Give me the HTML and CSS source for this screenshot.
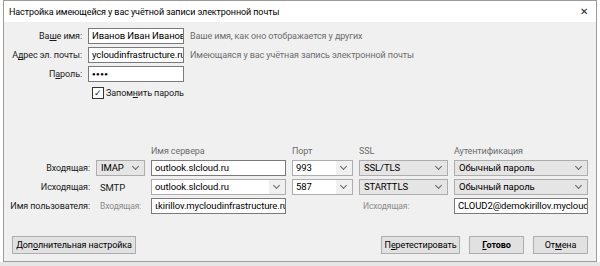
FILE: index.html
```html
<!DOCTYPE html>
<html lang="ru">
<head>
    <meta charset="UTF-8">
    <title>Настройка учётной записи</title>
    <link rel="stylesheet" href="styles.css">
</head>
<body>
    <div class="window">
        <div class="titlebar">
            <span class="title">Настройка имеющейся у вас учётной записи электронной почты</span>
            <span class="close">&#x2715;</span>
        </div>
        <div class="content">
            <div class="account">
                <label class="label">Ва<u>ш</u>е имя:</label>
                <div class="input">Иванов Иван Ивановι</div>
                <span class="hint">Ваше имя, как оно отображается у других</span>

                <label class="label">А<u>д</u>рес эл. почты:</label>
                <div class="input">ycloudinfrastructure.ru</div>
                <span class="hint">Имеющаяся у вас учётная запись электронной почты</span>

                <label class="label">П<u>а</u>роль:</label>
                <div class="input dots">&#x25CF;&#x25CF;&#x25CF;&#x25CF;</div>
                <span></span>

                <span></span>
                <div class="check">
                    <span class="box">&#x2713;</span>
                    <span>Запом<u>н</u>ить пароль</span>
                </div>
            </div>

            <div class="servers">
                <span></span>
                <span></span>
                <span class="head">Имя сервера</span>
                <span class="head">Порт</span>
                <span class="head">SSL</span>
                <span class="head">Аутентификация</span>

                <span class="label">Входящая:</span>
                <div class="select">IMAP<span class="arrow"></span></div>
                <div class="input">outlook.slcloud.ru</div>
                <div class="combo"><span class="value">993</span><span class="arrow"></span></div>
                <div class="select">SSL/TLS<span class="arrow"></span></div>
                <div class="select">Обычный пароль<span class="arrow"></span></div>

                <span class="label">Исходящая:</span>
                <span class="plain">SMTP</span>
                <div class="combo"><span class="value">outlook.slcloud.ru</span><span class="arrow"></span></div>
                <div class="combo"><span class="value">587</span><span class="arrow"></span></div>
                <div class="select">STARTTLS<span class="arrow"></span></div>
                <div class="select">Обычный пароль<span class="arrow"></span></div>

                <span class="label">Имя пользователя:</span>
                <span class="muted">Входящая:</span>
                <div class="input">ιkirillov.mycloudinfrastructure.ru</div>
                <span></span>
                <span class="muted">Исходящая:</span>
                <div class="input">CLOUD2@demokirillov.mycloud</div>
            </div>

            <div class="actions">
                <button class="btn wide">Доп<u>о</u>лнительная настройка</button>
                <div class="right">
                    <button class="btn retest">П<u>е</u>ретестировать</button>
                    <button class="btn default"><u>Г</u>отово</button>
                    <button class="btn">От<u>м</u>ена</button>
                </div>
            </div>
        </div>
    </div>
    <div class="desk"></div>
</body>
</html>
```

FILE: styles.css
```css
body {
    margin: 0;
    width: 600px;
    height: 266px;
    overflow: hidden;
    background: #ffffff;
    font-family: Roboto, 'Liberation Sans', sans-serif;
    font-size: 9px;
    letter-spacing: -0.1px;
    color: #1a1a1a;
}
.window {
    margin-left: 3px;
    width: 592px;
    height: 260px;
    border: 1px solid #9b9b9b;
    display: flex;
    flex-direction: column;
    background: #f0f0f0;
}
.titlebar {
    height: 21px;
    background: #fff;
    display: flex;
    align-items: center;
    justify-content: space-between;
    padding: 0 8px 0 5px;
}
.title {
    color: #000;
}
.close {
    font-size: 10px;
    color: #222;
}
.content {
    flex: 1;
    display: flex;
    flex-direction: column;
}
.account {
    display: grid;
    grid-template-columns: 78px 96px auto;
    column-gap: 6px;
    row-gap: 3px;
    grid-auto-rows: 16px;
    align-items: center;
    margin-top: 6px;
}
.label {
    text-align: right;
    white-space: nowrap;
}
.input {
    height: 14px;
    line-height: 14px;
    background: #fff;
    border: 1px solid #7a7a7a;
    padding: 0 3px;
    white-space: nowrap;
    overflow: hidden;
    font-size: 9.5px;
    color: #000;
}
.dots {
    font-size: 6px;
    letter-spacing: 0.5px;
}
.hint {
    color: #6d6d6d;
    white-space: nowrap;
}
.check {
    display: flex;
    align-items: center;
    gap: 2px;
    margin-left: 4px;
    white-space: nowrap;
}
.box {
    width: 10px;
    height: 10px;
    border: 1px solid #333;
    background: #fff;
    font-size: 9px;
    line-height: 10px;
    text-align: center;
}
.servers {
    display: grid;
    grid-template-columns: 86px 49px 135px 61px 89px 134px;
    column-gap: 6px;
    grid-template-rows: 13px 16px 16px 16px;
    row-gap: 3px;
    align-items: center;
    margin-top: 43px;
}
.head {
    color: #6d6d6d;
}
.plain {
    padding-left: 4px;
    font-size: 9.5px;
}
.muted {
    color: #8c8c8c;
    padding-left: 4px;
    font-size: 8.5px;
}
.select,
.combo {
    height: 14px;
    line-height: 14px;
    border: 1px solid #adadad;
    display: flex;
    justify-content: space-between;
    align-items: center;
    white-space: nowrap;
    font-size: 9.5px;
    color: #000;
}
.select {
    background: #e5e5e5;
    padding-left: 4px;
}
.combo {
    background: #f0f0f0;
}
.combo .value {
    flex: 1;
    background: #fff;
    height: 14px;
    padding-left: 3px;
    overflow: hidden;
}
.arrow {
    width: 16px;
    height: 14px;
    position: relative;
}
.arrow::after {
    content: "";
    position: absolute;
    left: 5px;
    top: 3px;
    width: 4px;
    height: 4px;
    border-right: 1px solid #666;
    border-bottom: 1px solid #666;
    transform: rotate(45deg);
}
.actions {
    display: flex;
    justify-content: space-between;
    padding: 0 8px;
    margin-top: 22px;
}
.right {
    display: flex;
    gap: 9px;
}
.btn {
    height: 18px;
    width: 55px;
    padding: 0;
    background: #e1e1e1;
    border: 1px solid #adadad;
    font-family: inherit;
    font-size: 9px;
    letter-spacing: -0.1px;
    white-space: nowrap;
    color: #000;
}
.btn.wide {
    width: 124px;
}
.btn.retest {
    width: 79px;
}
.btn.default {
    font-weight: bold;
}
.desk {
    height: 4px;
    background: #e6e6e6;
}
```
